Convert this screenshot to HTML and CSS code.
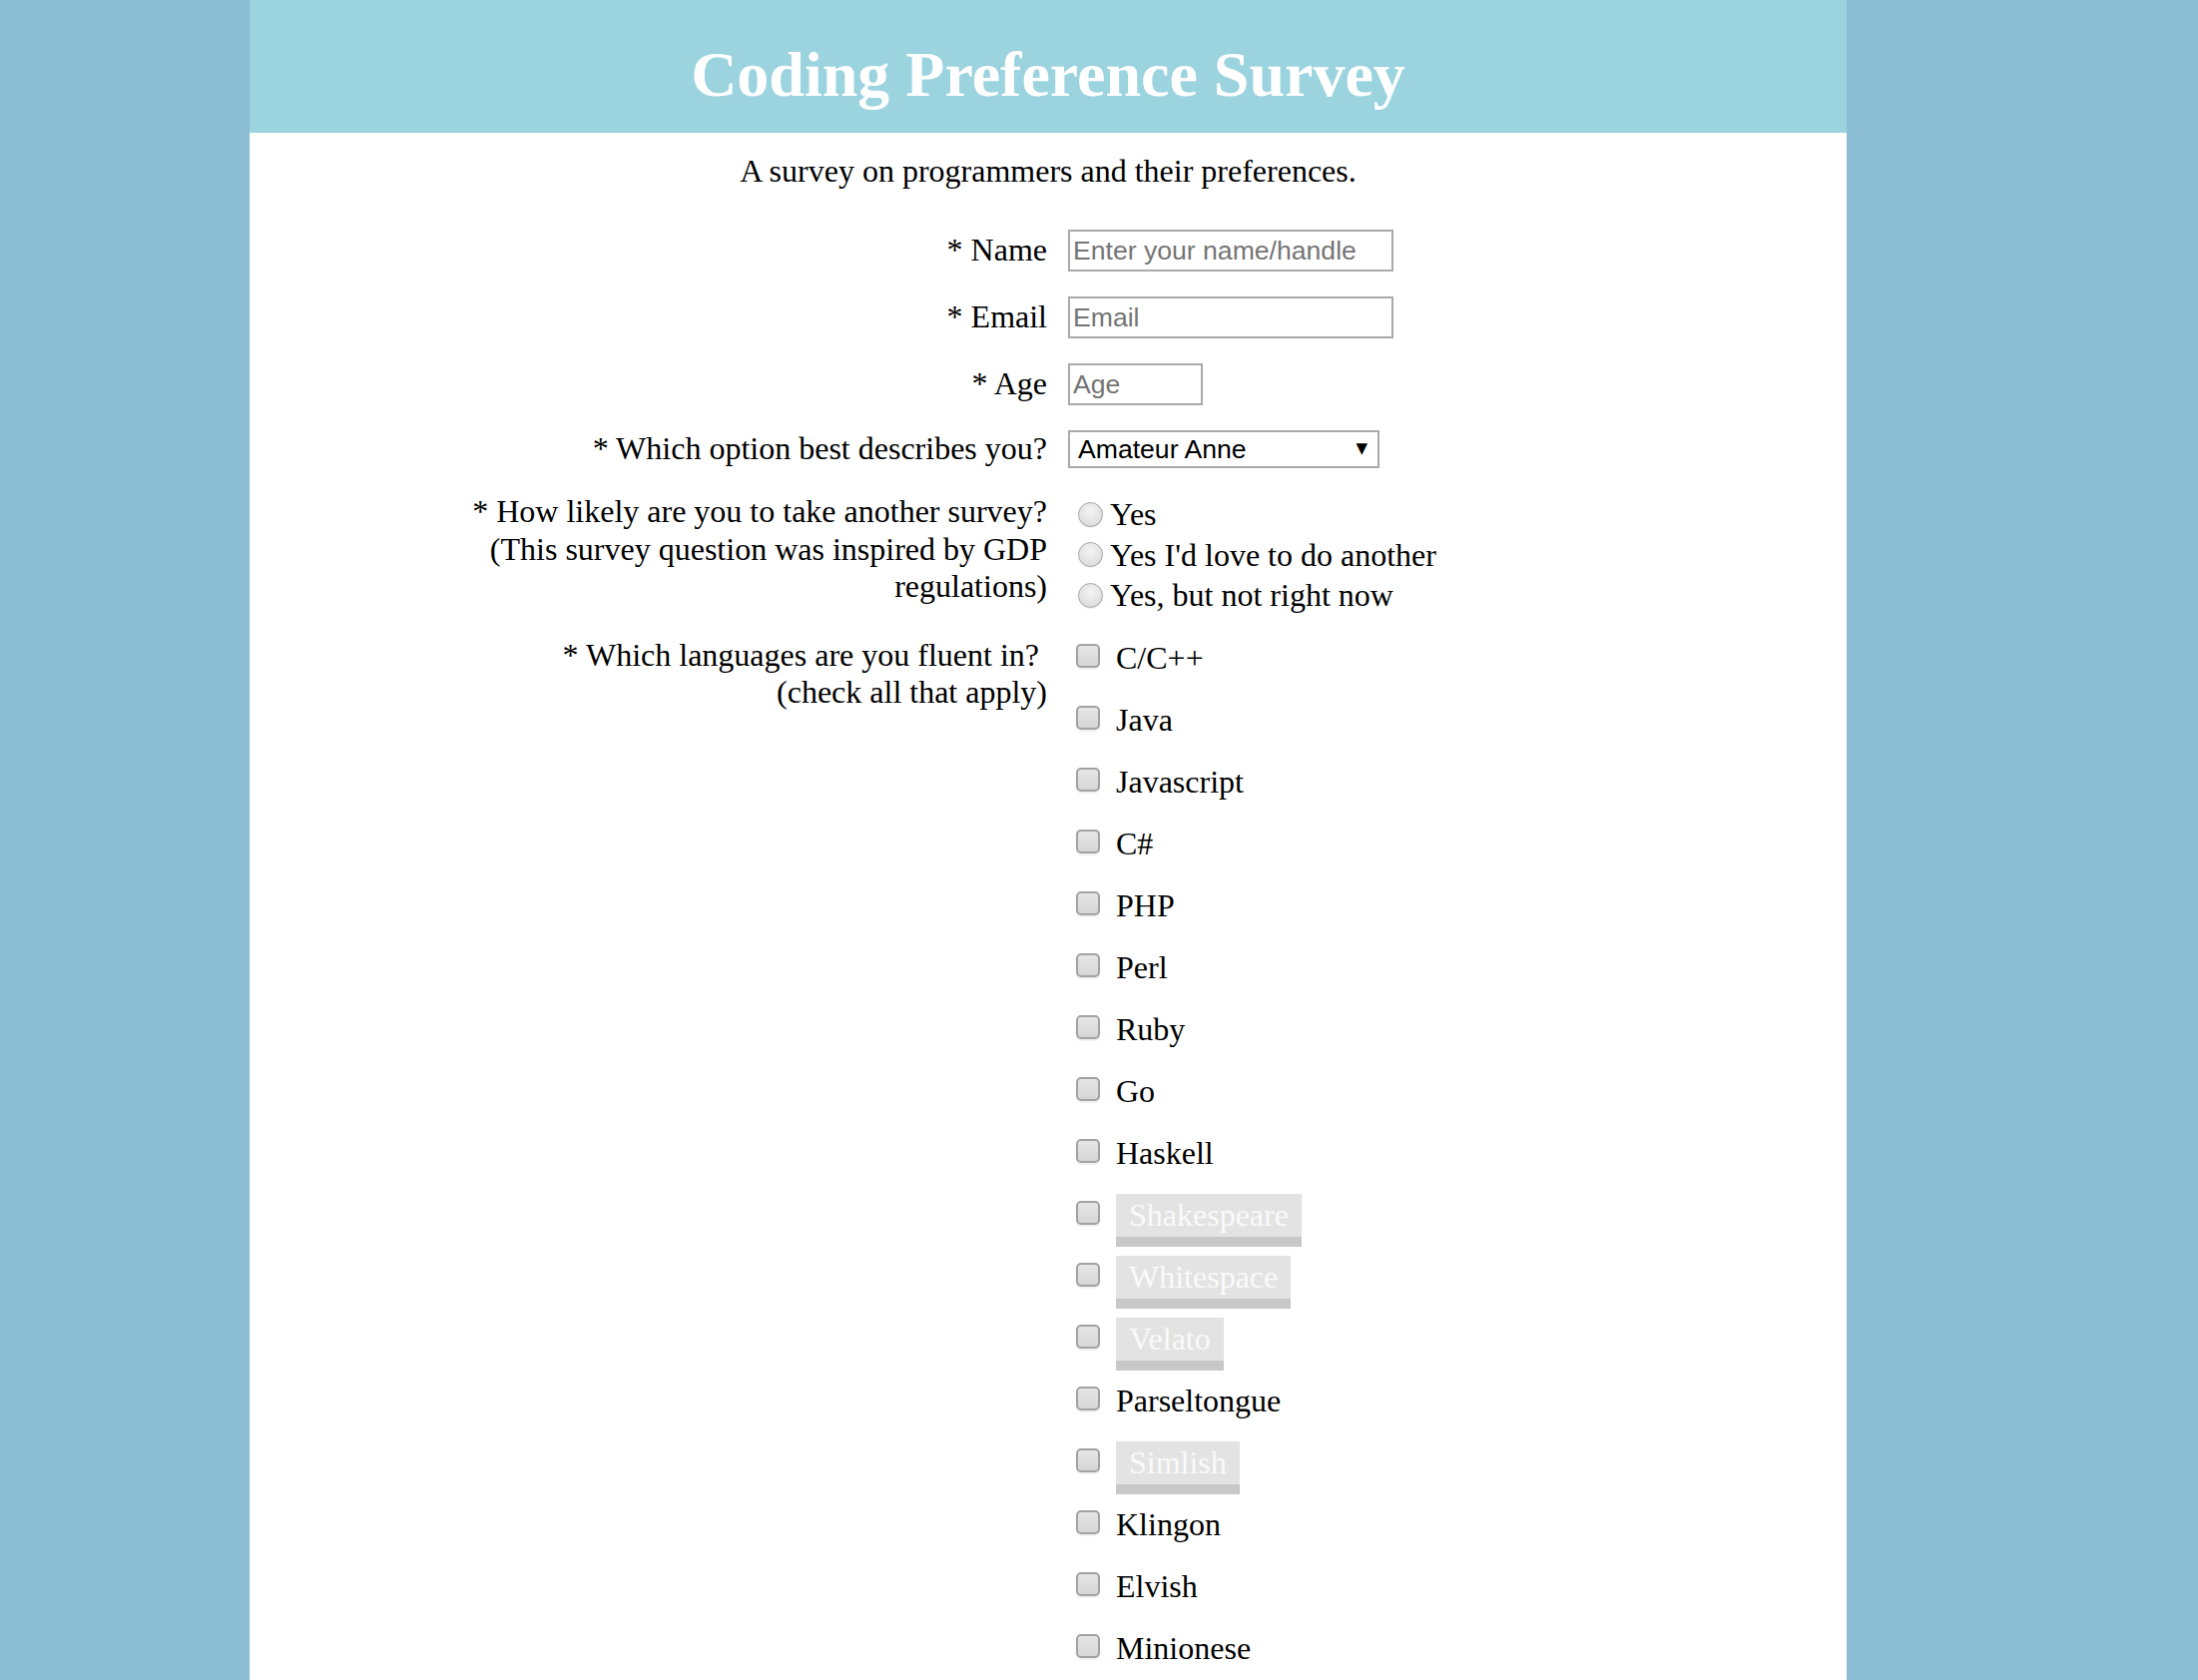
FILE: index.html
```html
<!DOCTYPE html>
<html lang="en">
<head>
<meta charset="utf-8">
<title>Coding Preference Survey</title>
<link rel="stylesheet" href="styles.css">
</head>
<body>
<div class="page">
  <header class="banner">
    <h1 class="title">Coding Preference Survey</h1>
  </header>
  <p class="desc">A survey on programmers and their preferences.</p>
  <form class="survey">
    <div class="row">
      <label class="q" for="name">* Name</label>
      <div class="a"><input class="field wide" id="name" type="text" placeholder="Enter your name/handle"></div>
    </div>
    <div class="row">
      <label class="q" for="email">* Email</label>
      <div class="a"><input class="field wide" id="email" type="email" placeholder="Email"></div>
    </div>
    <div class="row">
      <label class="q" for="age">* Age</label>
      <div class="a"><input class="field short" id="age" type="number" placeholder="Age"></div>
    </div>
    <div class="row">
      <label class="q" for="role">* Which option best describes you?</label>
      <div class="a"><span class="select-wrap"><select class="select" id="role">
        <option>Amateur Anne</option>
        <option>Professional Pat</option>
        <option>Student Sam</option>
      </select></span></div>
    </div>
    <div class="row top radio-row">
      <div class="q">* How likely are you to take another survey?<br>(This survey question was inspired by GDP<br>regulations)</div>
      <div class="a radios">
        <label class="radio"><input type="radio" name="again"><span>Yes</span></label>
        <label class="radio"><input type="radio" name="again"><span>Yes I'd love to do another</span></label>
        <label class="radio"><input type="radio" name="again"><span>Yes, but not right now</span></label>
      </div>
    </div>
    <div class="row top">
      <div class="q">* Which languages are you fluent in?&nbsp;<br>(check all that apply)</div>
      <div class="a checks">
        <label class="check"><input type="checkbox"><span class="lang">C/C++</span></label>
        <label class="check"><input type="checkbox"><span class="lang">Java</span></label>
        <label class="check"><input type="checkbox"><span class="lang">Javascript</span></label>
        <label class="check"><input type="checkbox"><span class="lang">C#</span></label>
        <label class="check"><input type="checkbox"><span class="lang">PHP</span></label>
        <label class="check"><input type="checkbox"><span class="lang">Perl</span></label>
        <label class="check"><input type="checkbox"><span class="lang">Ruby</span></label>
        <label class="check"><input type="checkbox"><span class="lang">Go</span></label>
        <label class="check"><input type="checkbox"><span class="lang">Haskell</span></label>
        <label class="check"><input type="checkbox"><span class="lang esoteric">Shakespeare</span></label>
        <label class="check"><input type="checkbox"><span class="lang esoteric">Whitespace</span></label>
        <label class="check"><input type="checkbox"><span class="lang esoteric">Velato</span></label>
        <label class="check"><input type="checkbox"><span class="lang">Parseltongue</span></label>
        <label class="check"><input type="checkbox"><span class="lang esoteric">Simlish</span></label>
        <label class="check"><input type="checkbox"><span class="lang">Klingon</span></label>
        <label class="check"><input type="checkbox"><span class="lang">Elvish</span></label>
        <label class="check"><input type="checkbox"><span class="lang">Minionese</span></label>
      </div>
    </div>
  </form>
</div>
</body>
</html>
```

FILE: styles.css
```css
html, body {
  margin: 0;
  padding: 0;
}
body {
  background: #8abdd4;
  font-family: "Liberation Serif", "Times New Roman", serif;
  font-size: 32px;
  color: #000;
}
.page {
  width: 1600px;
  margin-left: 250px;
  background: #fff;
  min-height: 1683px;
}
.banner {
  background: #9bd3df;
  height: 133px;
  box-sizing: border-box;
  padding-top: 39px;
}
.title {
  margin: 0;
  color: #fff;
  text-align: center;
  font-size: 64px;
  font-weight: bold;
  line-height: 72px;
}
.desc {
  margin: 20px 0 0;
  text-align: center;
  line-height: 36px;
}
.survey {
  padding-top: 41px;
}
.row {
  display: grid;
  grid-template-columns: 800px 1fr;
  align-items: center;
  margin-bottom: 25px;
}
.row:last-child {
  margin-bottom: 0;
}
.row.top {
  align-items: start;
}
.row.radio-row {
  margin-bottom: 21px;
}
.q {
  text-align: right;
  line-height: 37.5px;
  padding-right: 1px;
}
.a {
  padding-left: 20px;
}
.field {
  box-sizing: border-box;
  height: 42px;
  border: 2px solid #a9a9a9;
  font-family: "Liberation Sans", Arial, sans-serif;
  font-size: 26.6px;
  padding: 0 3px;
  margin: 0;
  color: #000;
  background: #fff;
  display: block;
}
.field::placeholder {
  color: #757575;
}
.wide { width: 326px; }
.short { width: 135px; }
.select-wrap {
  position: relative;
  display: block;
  width: 312px;
}
.select {
  -webkit-appearance: none;
  appearance: none;
  box-sizing: border-box;
  width: 312px;
  height: 38px;
  border: 2px solid #a9a9a9;
  border-radius: 0;
  background: #fff;
  font-family: "Liberation Sans", Arial, sans-serif;
  font-size: 26.6px;
  padding: 0 8px;
  margin: 0;
  color: #000;
  display: block;
}
.select-wrap::after {
  content: "\25BC";
  position: absolute;
  right: 12px;
  top: 8px;
  font-family: "DejaVu Sans", sans-serif;
  font-size: 15px;
  line-height: 20px;
  color: #000;
  pointer-events: none;
}
.radios {
  padding-left: 30px;
  padding-top: 1px;
}
.radio {
  display: flex;
  align-items: center;
  height: 40.5px;
  line-height: 40.5px;
}
.radio input {
  -webkit-appearance: none;
  appearance: none;
  width: 25px;
  height: 25px;
  margin: 0 7px 0 0;
  border-radius: 50%;
  border: 1px solid #a6a6a6;
  background: radial-gradient(circle at 50% 35%, #f4f4f4 0%, #e2e2e2 60%, #d4d4d4 100%);
  box-shadow: 0 1px 1px rgba(0,0,0,0.08);
  box-sizing: border-box;
  flex: none;
}
.checks {
  padding-left: 28px;
}
.check {
  display: flex;
  align-items: flex-start;
  height: 62px;
}
.check:last-child {
  height: 48px;
}
.check input {
  -webkit-appearance: none;
  appearance: none;
  box-sizing: border-box;
  width: 24px;
  height: 24px;
  margin: 7px 16px 0 0;
  border: 2px solid #a2a2a2;
  border-radius: 5px;
  background: linear-gradient(#e6e6e6, #d6d6d6);
  box-shadow: 0 2px 1px rgba(0,0,0,0.06);
  flex: none;
}
.lang {
  line-height: 43px;
}
.lang.esoteric {
  background: #e3e3e3;
  border-bottom: 10px solid #c8c8c8;
  color: #fafafa;
  padding: 0 13px;
}
```
